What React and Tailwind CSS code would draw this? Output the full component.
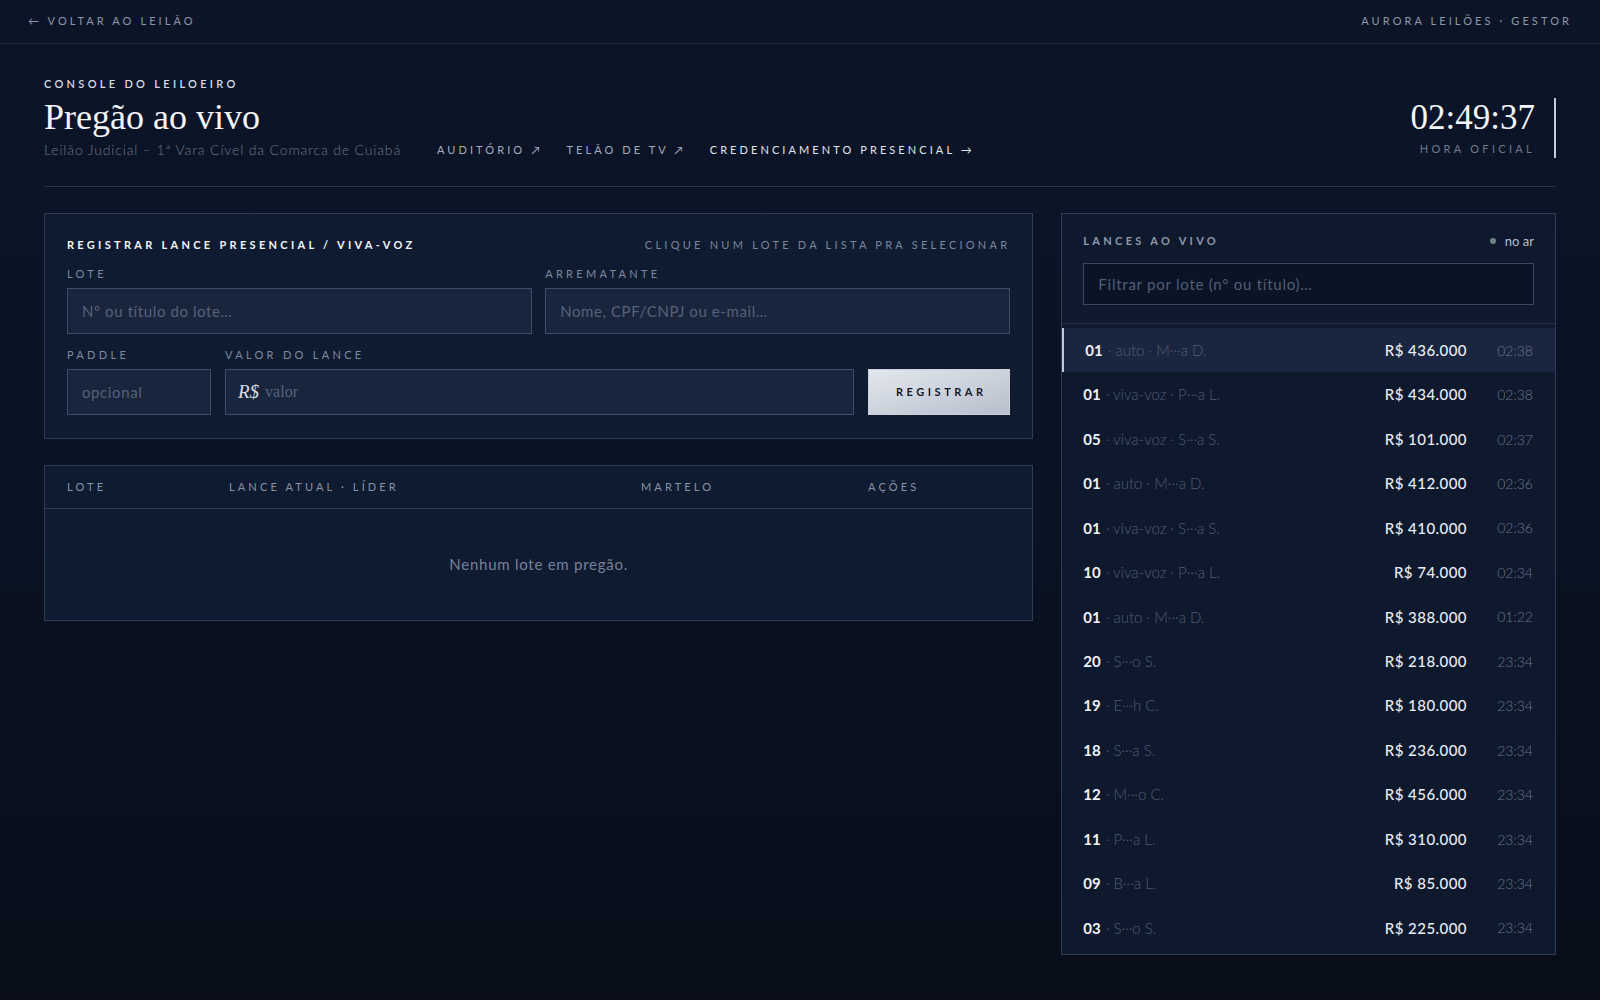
import React from "react";

const rows = [
  { lot: "01", meta: "auto · M···a D.", amount: "R$ 436.000", time: "02:38", selected: true },
  { lot: "01", meta: "viva-voz · P···a L.", amount: "R$ 434.000", time: "02:38" },
  { lot: "05", meta: "viva-voz · S···a S.", amount: "R$ 101.000", time: "02:37" },
  { lot: "01", meta: "auto · M···a D.", amount: "R$ 412.000", time: "02:36" },
  { lot: "01", meta: "viva-voz · S···a S.", amount: "R$ 410.000", time: "02:36" },
  { lot: "10", meta: "viva-voz · P···a L.", amount: "R$ 74.000", time: "02:34" },
  { lot: "01", meta: "auto · M···a D.", amount: "R$ 388.000", time: "01:22" },
  { lot: "20", meta: "S···o S.", amount: "R$ 218.000", time: "23:34" },
  { lot: "19", meta: "E···h C.", amount: "R$ 180.000", time: "23:34" },
  { lot: "18", meta: "S···a S.", amount: "R$ 236.000", time: "23:34" },
  { lot: "12", meta: "M···o C.", amount: "R$ 456.000", time: "23:34" },
  { lot: "11", meta: "P···a L.", amount: "R$ 310.000", time: "23:34" },
  { lot: "09", meta: "B···a L.", amount: "R$ 85.000", time: "23:34" },
  { lot: "03", meta: "S···o S.", amount: "R$ 225.000", time: "23:34" },
];

const sans = "font-['Lato','Open_Sans',sans-serif]";
const serif = "font-['Liberation_Serif','DejaVu_Serif',serif]";

function Label({ children }) {
  return (
    <div className="text-[11px] leading-[14px] tracking-[0.3em] text-[#7f8a9e] mb-[7px] uppercase">
      {children}
    </div>
  );
}

const inputCls =
  "h-[46px] border border-[#3c4b66] bg-[#19253c] px-[14px] flex items-center text-[15px] tracking-[0.04em] text-[#566279]";

export default function App() {
  return (
    <div className={`${sans} min-h-screen w-full bg-gradient-to-b from-[#0c1528] via-[#0a1324] to-[#080d19] text-[#e6e9ef]`}>
      {/* Top bar */}
      <header className="h-[44px] border-b border-[#1f2b40] px-7 flex items-center justify-between text-[11px] tracking-[0.28em] text-[#8d97a9]">
        <span>← VOLTAR AO LEILÃO</span>
        <span>AURORA LEILÕES · GESTOR</span>
      </header>

      <main className="px-11">
        {/* Page header */}
        <section className="pt-[32px] pb-[27px] border-b border-[#263349] flex items-end justify-between">
          <div>
            <div className="text-[11px] leading-[16px] tracking-[0.3em] font-semibold text-[#d6dbe4]">
              CONSOLE DO LEILOEIRO
            </div>
            <h1 className={`${serif} text-[36px] leading-[44px] mt-[3px] text-[#f3f5f8]`}>Pregão ao vivo</h1>
            <div className="flex items-center mt-[2px] leading-[18px]">
              <span className="text-[14px] font-light tracking-[0.06em] text-[#6b768a]">
                Leilão Judicial – 1ª Vara Cível da Comarca de Cuiabá
              </span>
              <div className="ml-9 flex items-center gap-6 text-[11px] tracking-[0.28em]">
                <span className="text-[#a4adbd]">AUDITÓRIO ↗</span>
                <span className="text-[#a4adbd]">TELÃO DE TV ↗</span>
                <span className="text-[#e1e5ec]">CREDENCIAMENTO PRESENCIAL →</span>
              </div>
            </div>
          </div>
          <div className="border-r-2 border-[#c5ccd7] pr-[19px] flex flex-col items-end mb-[1px]">
            <div className={`${serif} text-[35px] leading-[39px] text-[#f3f5f8]`}>02:49:37</div>
            <div className="text-[11px] leading-[18px] tracking-[0.3em] text-[#6e798c] mt-[3px]">HORA OFICIAL</div>
          </div>
        </section>

        {/* Content grid */}
        <section className="grid grid-cols-[2fr_1fr] gap-7 mt-[26px] items-start">
          <div className="flex flex-col gap-[26px]">
            {/* Register panel */}
            <div className="border border-[#2e3c56] bg-[#0f1b31] px-[22px] pt-[23px] pb-[23px]">
              <div className="flex items-center justify-between leading-[16px]">
                <span className="text-[11px] font-bold tracking-[0.3em] text-[#f3f5f8]">
                  REGISTRAR LANCE PRESENCIAL / VIVA-VOZ
                </span>
                <span className="text-[11px] tracking-[0.295em] text-[#7b869a]">
                  CLIQUE NUM LOTE DA LISTA PRA SELECIONAR
                </span>
              </div>
              <div className="grid grid-cols-2 gap-[13px] mt-[14px]">
                <div>
                  <Label>Lote</Label>
                  <div className={inputCls}>Nº ou título do lote…</div>
                </div>
                <div>
                  <Label>Arrematante</Label>
                  <div className={inputCls}>Nome, CPF/CNPJ ou e-mail…</div>
                </div>
              </div>
              <div className="grid grid-cols-[144px_1fr_142px] gap-[14px] mt-[14px] items-end">
                <div>
                  <Label>Paddle</Label>
                  <div className={inputCls}>opcional</div>
                </div>
                <div>
                  <Label>Valor do lance</Label>
                  <div className={`${serif} h-[46px] border border-[#3c4b66] bg-[#19253c] px-[12px] flex items-center gap-[6px]`}>
                    <span className="italic text-[19px] text-[#d8dde6]">R$</span>
                    <span className="text-[16px] text-[#566279]">valor</span>
                  </div>
                </div>
                <button className="h-[46px] border border-[#c9d0da] bg-gradient-to-br from-[#e3e7ee] to-[#b7bfcc] text-[11px] font-bold tracking-[0.32em] text-[#111a2c] pl-[4px]">
                  REGISTRAR
                </button>
              </div>
            </div>

            {/* Table panel */}
            <div className="border border-[#2e3c56] bg-[#0f1b31]">
              <div className="h-[43px] border-b border-[#2e3c56] px-[22px] grid grid-cols-[162px_412px_227px_1fr] items-center text-[11px] tracking-[0.285em] text-[#8993a6]">
                <span>LOTE</span>
                <span>LANCE ATUAL · LÍDER</span>
                <span>MARTELO</span>
                <span>AÇÕES</span>
              </div>
              <div className="h-[111px] flex items-center justify-center text-[15px] tracking-[0.05em] text-[#76819a]">
                Nenhum lote em pregão.
              </div>
            </div>
          </div>

          {/* Live bids panel */}
          <div className="border border-[#2e3c56] bg-[#0e192e]">
            <div className="px-[21px] pt-[20px] pb-[18px] border-b border-[#25324a]">
              <div className="flex items-center justify-between leading-[14px]">
                <span className="text-[11px] font-bold tracking-[0.3em] text-[#8e98aa]">LANCES AO VIVO</span>
                <span className="flex items-center gap-[9px] text-[13px] text-[#b7bfcc]">
                  <span className="w-[6px] h-[6px] rounded-full bg-[#6f8585]" />
                  no ar
                </span>
              </div>
              <div className="mt-[15px] h-[42px] border border-[#3a4963] bg-[#0b1426] px-[14px] flex items-center text-[15px] tracking-[0.05em] text-[#525e75]">
                Filtrar por lote (nº ou título)…
              </div>
            </div>
            <div className="pt-[4px] pb-[4px]">
              {rows.map((r, i) => (
                <div
                  key={i}
                  className={
                    "h-[44.45px] flex items-center pr-[22px] text-[15px] " +
                    (r.selected ? "bg-[#1a2640] border-l-2 border-[#c2c9d4] pl-[21px]" : "pl-[21px]")
                  }
                >
                  <div className="flex-1 flex items-center min-w-0">
                    <span className="font-bold text-[#eef1f5]">{r.lot}</span>
                    <span className="font-light text-[#4f5b72] ml-[5px]">· {r.meta}</span>
                  </div>
                  <span className="font-medium tracking-[0.03em] text-[#e9ecf1]">{r.amount}</span>
                  <span className="w-[66px] text-right text-[14px] font-light text-[#6a7589]">{r.time}</span>
                </div>
              ))}
            </div>
          </div>
        </section>
      </main>
    </div>
  );
}
